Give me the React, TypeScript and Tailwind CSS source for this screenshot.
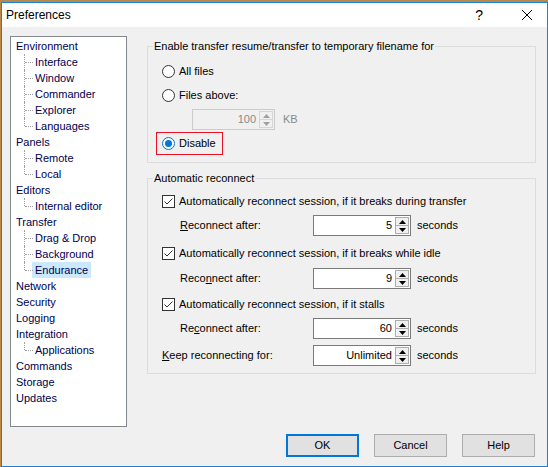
import React from 'react';

type Node = { label: string; children?: string[] };

const tree: Node[] = [
  { label: 'Environment', children: ['Interface', 'Window', 'Commander', 'Explorer', 'Languages'] },
  { label: 'Panels', children: ['Remote', 'Local'] },
  { label: 'Editors', children: ['Internal editor'] },
  { label: 'Transfer', children: ['Drag & Drop', 'Background', 'Endurance'] },
  { label: 'Network' },
  { label: 'Security' },
  { label: 'Logging' },
  { label: 'Integration', children: ['Applications'] },
  { label: 'Commands' },
  { label: 'Storage' },
  { label: 'Updates' },
];

const TreeChild = ({ label, last, selected }: { label: string; last: boolean; selected: boolean }) => (
  <div className="flex h-[16px] items-center">
    <div className="relative h-[16px] w-[16px] shrink-0">
      <div
        className={`absolute left-[8px] top-0 border-l border-dotted border-[#a0a0a0] ${last ? 'h-[8px]' : 'h-[16px]'}`}
      />
      <div className="absolute left-[9px] top-[8px] w-[8px] border-t border-dotted border-[#a0a0a0]" />
    </div>
    <span className={`px-[3px] leading-[16px] ${selected ? 'bg-[#cce8ff]' : ''}`}>{label}</span>
  </div>
);

const Radio = ({ checked }: { checked?: boolean }) => (
  <span
    className={`flex h-[13px] w-[13px] shrink-0 items-center justify-center rounded-full border bg-white ${
      checked ? 'border-[#0078d7]' : 'border-[#333333]'
    }`}
  >
    {checked && <span className="h-[7px] w-[7px] rounded-full bg-[#0078d7]" />}
  </span>
);

const Check = () => (
  <span className="flex h-[13px] w-[13px] shrink-0 items-center justify-center border border-[#333333] bg-white">
    <svg width="11" height="11" viewBox="0 0 11 11">
      <path d="M1.5 5.5 L4 8 L9.5 2.5" fill="none" stroke="#333333" strokeWidth="1" />
    </svg>
  </span>
);

const SpinArrows = ({ disabled }: { disabled?: boolean }) => {
  const c = disabled ? '#a0a0a0' : '#000000';
  return (
    <div className="flex h-full w-[15px] flex-col py-[1px] pr-[1px]">
      <div className={`flex flex-1 items-center justify-center border ${disabled ? 'border-[#d6d6d6]' : 'border-[#adadad]'} bg-[#f0f0f0]`}>
        <svg width="7" height="4" viewBox="0 0 7 4">
          <path d="M0 4 L3.5 0 L7 4 Z" fill={c} />
        </svg>
      </div>
      <div className={`flex flex-1 items-center justify-center border border-t-0 ${disabled ? 'border-[#d6d6d6]' : 'border-[#adadad]'} bg-[#f0f0f0]`}>
        <svg width="7" height="4" viewBox="0 0 7 4">
          <path d="M0 0 L7 0 L3.5 4 Z" fill={c} />
        </svg>
      </div>
    </div>
  );
};

const Spin = ({ value, width, disabled }: { value: string; width: string; disabled?: boolean }) => (
  <div
    className={`flex h-[21px] items-center border ${width} ${
      disabled ? 'border-[#cccccc] bg-[#f0f0f0] text-[#8a8a8a]' : 'border-[#7a7a7a] bg-white'
    }`}
  >
    <span className="flex-1 pr-[3px] text-right">{value}</span>
    <SpinArrows disabled={disabled} />
  </div>
);

const Group = ({ title, className, children }: { title: string; className: string; children: React.ReactNode }) => (
  <div className={`relative border border-[#dcdcdc] ${className}`}>
    <span className="absolute left-[5px] top-[-8px] bg-[#f0f0f0] px-[1px] leading-[15px]">{title}</span>
    {children}
  </div>
);

const ReconnectRow = ({ label, value, indent = true }: { label: React.ReactNode; value: string; indent?: boolean }) => (
  <div className={`flex h-[21px] items-center ${indent ? 'pl-[18px]' : ''}`}>
    <span className={indent ? 'w-[133px]' : 'w-[151px]'}>{label}</span>
    <Spin value={value} width="w-[98px]" />
    <span className="ml-[6px]">seconds</span>
  </div>
);

const Btn = ({ label, primary }: { label: string; primary?: boolean }) => (
  <div
    className={`flex h-[23px] w-[73px] items-center justify-center bg-[#e1e1e1] ${
      primary ? 'border-2 border-[#0078d7]' : 'border border-[#adadad]'
    }`}
  >
    {label}
  </div>
);

export default function App() {
  return (
    <div
      className="h-[467px] w-[548px] overflow-hidden bg-[#b88a4a] pl-[1px] pt-[2px] text-[11px] text-black"
      style={{ fontFamily: '"Liberation Sans", Arial, sans-serif' }}
    >
      <div className="flex h-[465px] w-[547px] flex-col border border-[#1883d7] bg-[#f0f0f0]">
        {/* title bar */}
        <div className="flex h-[24px] items-center bg-white">
          <span className="ml-[4px] text-[12px]">Preferences</span>
          <span className="ml-auto mr-[38px] text-[14px]">?</span>
          <svg width="12" height="12" viewBox="0 0 12 12" className="mr-[14px]">
            <path d="M1 1 L11 11 M11 1 L1 11" stroke="#000" strokeWidth="1" />
          </svg>
        </div>

        <div className="flex flex-1 flex-col px-[8px] pt-[9px]">
          <div className="flex gap-[20px]">
            {/* tree */}
            <div className="h-[391px] w-[117px] border border-[#828790] bg-white pl-[5px] pt-[1px] text-[#000050]">
              {tree.map((n) => (
                <div key={n.label}>
                  <div className="h-[16px] leading-[16px]">{n.label}</div>
                  {n.children?.map((c, i) => (
                    <TreeChild
                      key={c}
                      label={c}
                      last={i === n.children!.length - 1}
                      selected={c === 'Endurance'}
                    />
                  ))}
                </div>
              ))}
            </div>

            {/* right side */}
            <div className="flex flex-col pt-[10px]">
              <Group title="Enable transfer resume/transfer to temporary filename for" className="h-[117px] w-[389px]">
                <div className="flex flex-col pl-[14px] pt-[16px]">
                  <div className="flex h-[16px] items-center gap-[4px]">
                    <Radio />
                    <span>All files</span>
                  </div>
                  <div className="mt-[8px] flex h-[16px] items-center gap-[4px]">
                    <Radio />
                    <span>Files above:</span>
                  </div>
                  <div className="ml-[30px] mt-[6px] flex items-center">
                    <Spin value="100" width="w-[83px]" disabled />
                    <span className="ml-[8px] text-[#8a8a8a]">KB</span>
                  </div>
                  <div className="-ml-[6px] mt-[2px] flex h-[23px] w-[67px] items-center gap-[4px] border border-[#e81123] pl-[5px]">
                    <Radio checked />
                    <span>Disable</span>
                  </div>
                </div>
              </Group>

              <Group title="Automatic reconnect" className="mt-[15px] h-[196px] w-[389px]">
                <div className="flex flex-col pl-[14px] pt-[14px]">
                  <div className="flex h-[16px] items-center gap-[4px]">
                    <Check />
                    <span>Automatically reconnect session, if it breaks during transfer</span>
                  </div>
                  <div className="mt-[6px]">
                    <ReconnectRow
                      label={<><span className="underline">R</span>econnect after:</>}
                      value="5"
                    />
                  </div>
                  <div className="mt-[9px] flex h-[16px] items-center gap-[4px]">
                    <Check />
                    <span>Automatically reconnect session, if it breaks while idle</span>
                  </div>
                  <div className="mt-[7px]">
                    <ReconnectRow
                      label={<>Reco<span className="underline">n</span>nect after:</>}
                      value="9"
                    />
                  </div>
                  <div className="mt-[7px] flex h-[16px] items-center gap-[4px]">
                    <Check />
                    <span>Automatically reconnect session, if it stalls</span>
                  </div>
                  <div className="mt-[6px]">
                    <ReconnectRow
                      label={<>Re<span className="underline">c</span>onnect after:</>}
                      value="60"
                    />
                  </div>
                  <div className="mt-[6px]">
                    <ReconnectRow
                      label={<><span className="underline">K</span>eep reconnecting for:</>}
                      value="Unlimited"
                      indent={false}
                    />
                  </div>
                </div>
              </Group>
            </div>
          </div>

          <div className="mt-[7px] flex justify-end gap-[15px] pr-[4px]">
            <Btn label="OK" primary />
            <Btn label="Cancel" />
            <Btn label="Help" />
          </div>
        </div>
      </div>
    </div>
  );
}
